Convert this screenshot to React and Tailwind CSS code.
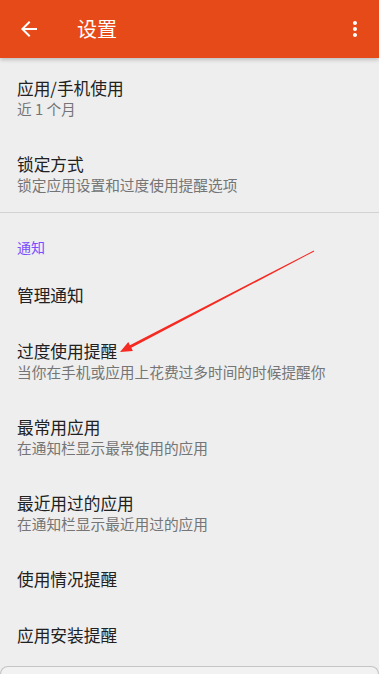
import React from "react";

const font = { fontFamily: '"Noto Sans CJK SC", Roboto, sans-serif' };

const Item = ({ title, sub }) => (
  <div
    className={`flex flex-col justify-center pl-[17px] pr-4 ${
      sub ? "h-[76px]" : "h-14"
    }`}
  >
    <div className="text-[16.7px] leading-[22px] text-[#212121]">{title}</div>
    {sub && (
      <div className="text-[14.7px] leading-[20px] text-[#757575]">{sub}</div>
    )}
  </div>
);

const App = () => {
  return (
    <div
      className="relative w-[379px] h-[674px] overflow-hidden bg-[#eeeeee] flex flex-col"
      style={font}
    >
      <div className="h-[58px] shrink-0 bg-[#e64a19] flex items-center shadow-[0_2px_4px_rgba(0,0,0,0.2)] z-10">
        <svg className="ml-[17px] w-6 h-6" viewBox="0 0 24 24" fill="#ffffff">
          <path d="M20 11H7.83l5.59-5.59L12 4l-8 8 8 8 1.41-1.41L7.83 13H20v-2z" />
        </svg>
        <div className="ml-[36px] text-[20px] text-white leading-none">设置</div>
        <svg className="ml-auto mr-3 w-6 h-6" viewBox="0 0 24 24" fill="#ffffff">
          <path d="M12 8c1.1 0 2-.9 2-2s-.9-2-2-2-2 .9-2 2 .9 2 2 2zm0 2c-1.1 0-2 .9-2 2s.9 2 2 2 2-.9 2-2-.9-2-2-2zm0 6c-1.1 0-2 .9-2 2s.9 2 2 2 2-.9 2-2-.9-2-2-2z" />
        </svg>
      </div>

      <div className="pt-[2px]">
        <Item title="应用/手机使用" sub="近 1 个月" />
        <Item title="锁定方式" sub="锁定应用设置和过度使用提醒选项" />
      </div>

      <div className="border-t border-[#d2d2d2]" />

      <div className="pl-[17px] pt-6 pb-[10px] text-[14px] leading-[20px] text-[#7c4dff]">
        通知
      </div>

      <Item title="管理通知" />
      <Item title="过度使用提醒" sub="当你在手机或应用上花费过多时间的时候提醒你" />
      <Item title="最常用应用" sub="在通知栏显示最常使用的应用" />
      <Item title="最近用过的应用" sub="在通知栏显示最近用过的应用" />
      <Item title="使用情况提醒" />
      <Item title="应用安装提醒" />

      <div className="mt-[3px] flex-1 rounded-t-[8px] border-t border-x border-[#c4c4c4] bg-[#f2f2f2]" />

      <svg
        className="absolute inset-0 pointer-events-none"
        width="379"
        height="674"
        viewBox="0 0 379 674"
      >
        <polygon
          fill="#f52a22"
          points="313.8,250.6 314.2,251.4 131.3,347.8 132.9,350.9 120,352 128.3,342.1 129.9,345.2"
        />
      </svg>
    </div>
  );
};

export default App;
